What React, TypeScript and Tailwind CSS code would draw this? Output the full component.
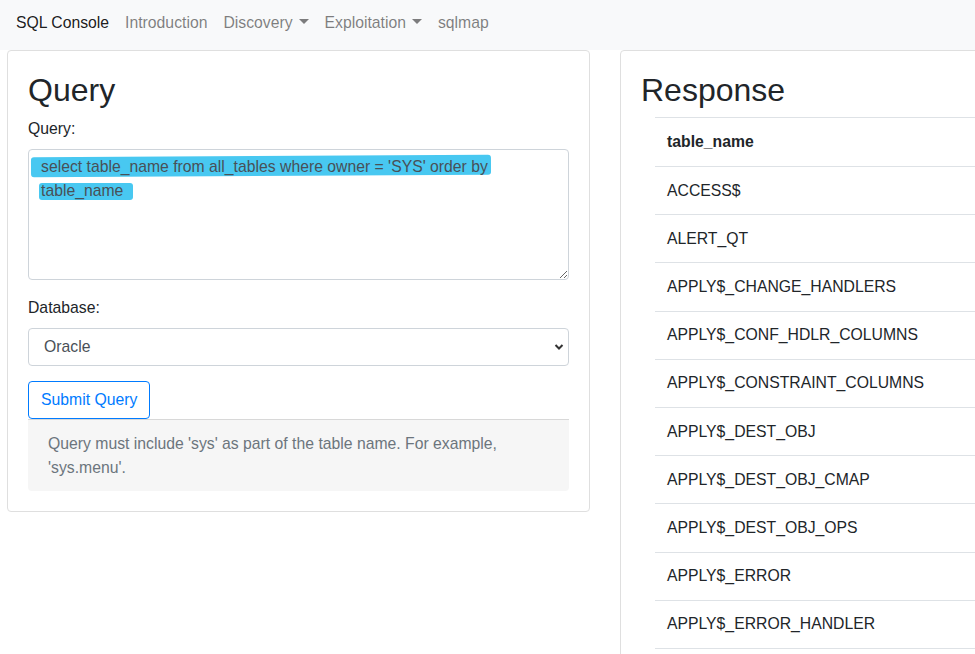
import React from "react";

const rows = [
  "ACCESS$",
  "ALERT_QT",
  "APPLY$_CHANGE_HANDLERS",
  "APPLY$_CONF_HDLR_COLUMNS",
  "APPLY$_CONSTRAINT_COLUMNS",
  "APPLY$_DEST_OBJ",
  "APPLY$_DEST_OBJ_CMAP",
  "APPLY$_DEST_OBJ_OPS",
  "APPLY$_ERROR",
  "APPLY$_ERROR_HANDLER",
];

function Caret() {
  return (
    <span className="ml-[6px] inline-block h-0 w-0 translate-y-[-2px] border-x-[5px] border-t-[5px] border-x-transparent border-t-[rgba(0,0,0,0.5)] align-middle" />
  );
}

export default function App() {
  return (
    <div
      className="h-[654px] w-[975px] overflow-hidden bg-white text-[15.75px] leading-[24px] text-[#212529]"
      style={{ fontFamily: '"Liberation Sans", Arial, sans-serif' }}
    >
      <nav className="flex h-[50px] items-start bg-[#f8f9fa] px-[8px] pt-[11px]">
        <a className="px-[8px] text-[rgba(0,0,0,0.9)]">SQL Console</a>
        <a className="px-[8px] text-[rgba(0,0,0,0.5)]">Introduction</a>
        <a className="flex items-center px-[8px] text-[rgba(0,0,0,0.5)]">
          Discovery
          <Caret />
        </a>
        <a className="flex items-center px-[8px] text-[rgba(0,0,0,0.5)]">
          Exploitation
          <Caret />
        </a>
        <a className="px-[8px] text-[rgba(0,0,0,0.5)]">sqlmap</a>
      </nav>

      <div className="flex gap-[30px] pl-[7px]">
        <div className="w-[583px] shrink-0 self-start rounded-[4px] border border-[#dfdfdf] p-[20px]">
          <h2 className="mb-[8px] text-[32px] font-normal leading-[38px]">Query</h2>
          <label className="mb-[8px] block">Query:</label>
          <div className="relative mb-[16px] h-[131px] rounded-[4px] bg-white">
            <div className="absolute left-[3px] top-[7px] h-[20px] w-[460px] -rotate-[0.3deg] rounded-[3px] bg-[#48c8f1]" />
            <div className="absolute left-[11px] top-[34px] h-[17px] w-[94px] rounded-[3px] bg-[#48c8f1]" />
            <textarea
              readOnly
              className="relative block h-full w-full resize-y rounded-[4px] border border-[#ced4da] bg-transparent px-[12px] pb-[4px] pt-[5px] text-[15.75px] leading-[24px] text-[#495057] outline-none"
              style={{ fontFamily: '"Liberation Sans", Arial, sans-serif' }}
              defaultValue="select table_name from all_tables where owner = 'SYS' order by table_name"
            />
          </div>
          <label className="mb-[8px] block">Database:</label>
          <div className="relative mb-[15px] flex h-[38px] items-center rounded-[4px] border border-[#ced4da] pl-[15px] text-[#495057]">
            Oracle
            <svg className="absolute right-[4px] top-[14px]" width="10" height="8" viewBox="0 0 10 8">
              <path d="M1.5 2 L5 5.5 L8.5 2" fill="none" stroke="#333" strokeWidth="2" />
            </svg>
          </div>
          <button className="h-[38px] rounded-[4px] border border-[#007bff] px-[12px] text-[15.75px] text-[#007bff]">
            Submit Query
          </button>
          <div className="rounded-b-[4px] border-t border-[#d8d8d8] bg-[#f6f6f6] px-[20px] pb-[11px] pt-[12px] text-[#6c757d]">
            Query must include 'sys' as part of the table name. For example, 'sys.menu'.
          </div>
        </div>

        <div className="h-[700px] w-[583px] shrink-0 rounded-[4px] border border-[#dfdfdf] p-[20px]">
          <h2 className="mb-[8px] text-[32px] font-normal leading-[38px]">Response</h2>
          <div className="ml-[14px] border-b border-[#dee2e6]">
            <div className="flex h-[49px] items-center border-t border-[#dee2e6] px-[12px] font-bold">
              table_name
            </div>
            {rows.map((r) => (
              <div
                key={r}
                className="flex h-[48.2px] items-center border-t border-[#dee2e6] px-[12px]"
              >
                {r}
              </div>
            ))}
          </div>
        </div>
      </div>
    </div>
  );
}
